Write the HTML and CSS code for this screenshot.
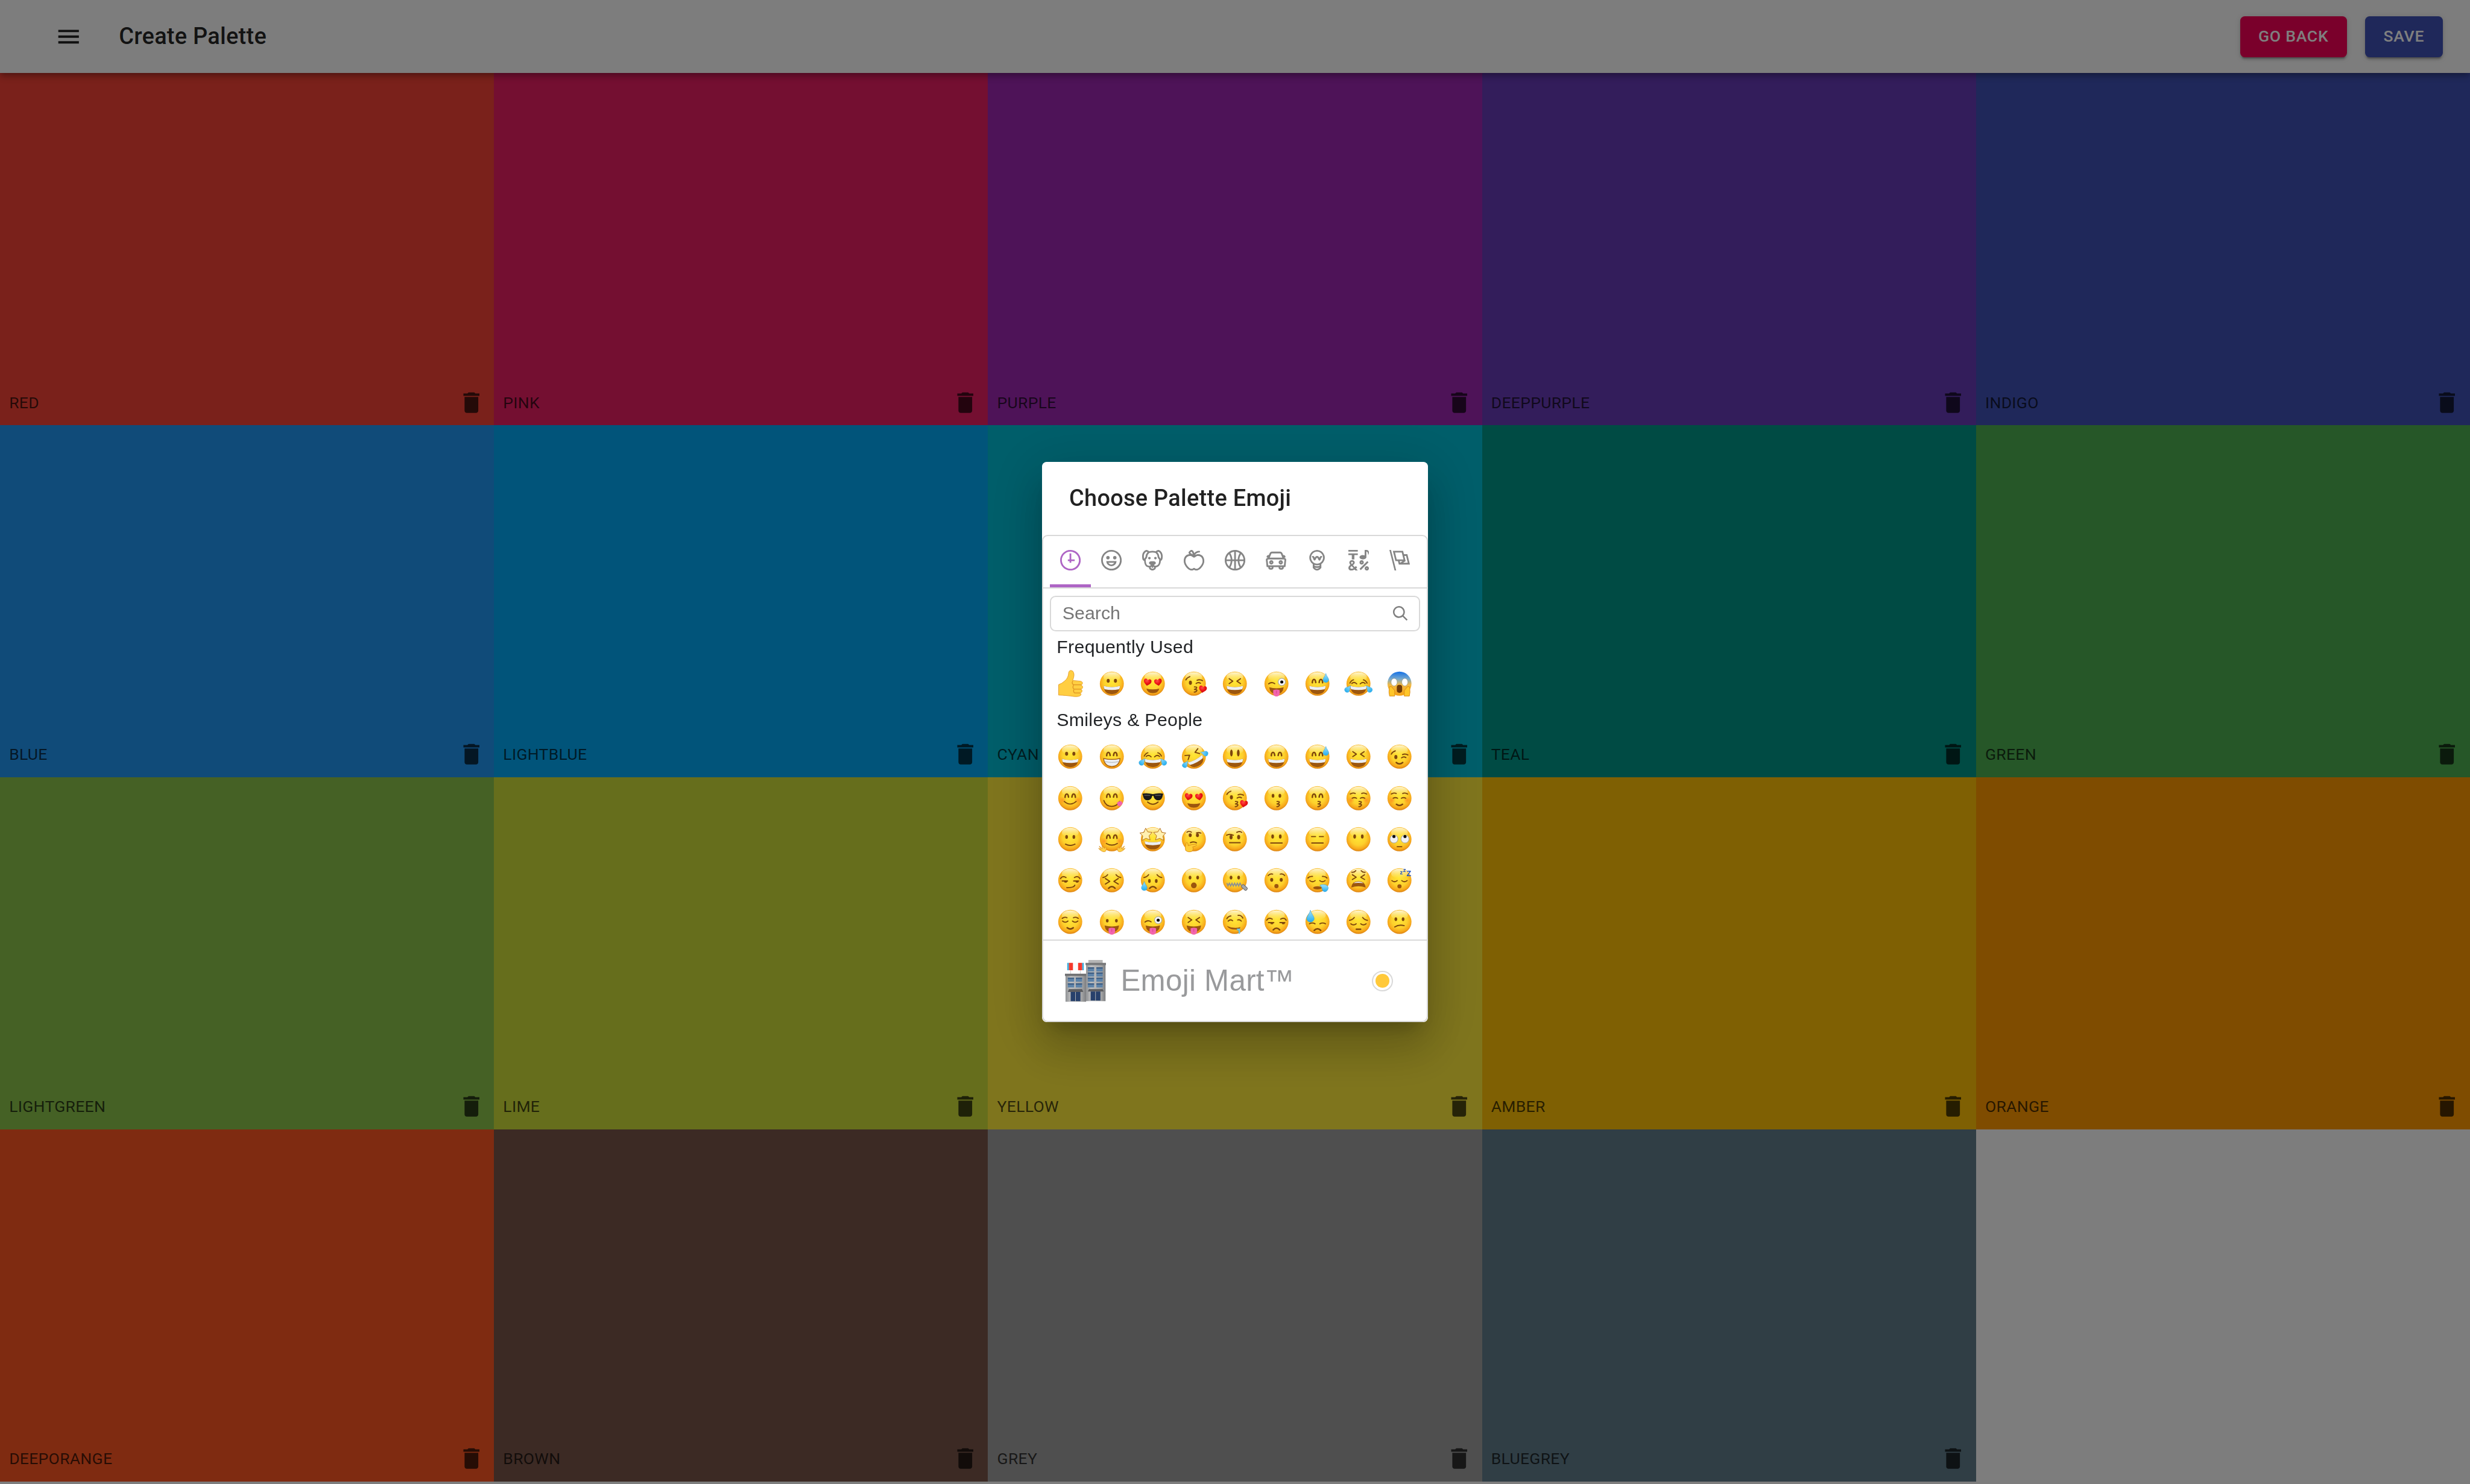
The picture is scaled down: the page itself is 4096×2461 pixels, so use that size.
FILE: index.html
```html
<!DOCTYPE html>
<html lang="en">
<head>
<meta charset="utf-8">
<title>Create Palette</title>
<link rel="stylesheet" href="styles.css">
</head>
<body>
<div class="app">
  <header class="appbar">
    <svg class="icon" viewBox="0 0 24 24"><path d="M3 18h18v-2H3v2zm0-5h18v-2H3v2zm0-7v2h18V6H3z"/></svg>
    <h1 class="appbar-title">Create Palette</h1>
    <div class="appbar-actions">
      <button class="btn btn-secondary">GO BACK</button>
      <button class="btn btn-primary">SAVE</button>
    </div>
  </header>
  <main class="palette" id="palette"></main>
</div>

<div class="backdrop">
  <section class="dialog">
    <h2 class="dialog-title">Choose Palette Emoji</h2>
    <div class="picker">
      <nav class="anchors">
        <span class="anchor anchor-selected"><svg viewBox="0 0 24 24"><path d="M13 4h-2l-.001 7H9v2h2v2h2v-2h4v-2h-4z"/><path d="M12 0C5.373 0 0 5.373 0 12s5.373 12 12 12 12-5.373 12-12S18.627 0 12 0m0 22C6.486 22 2 17.514 2 12S6.486 2 12 2s10 4.486 10 10-4.486 10-10 10"/></svg></span>
        <span class="anchor"><svg viewBox="0 0 24 24"><path d="M12 0C5.373 0 0 5.373 0 12s5.373 12 12 12 12-5.373 12-12S18.627 0 12 0m0 22C6.486 22 2 17.514 2 12S6.486 2 12 2s10 4.486 10 10-4.486 10-10 10"/><path d="M8 7a2 2 0 1 0-.001 3.999A2 2 0 0 0 8 7M16 7a2 2 0 1 0-.001 3.999A2 2 0 0 0 16 7M15.232 15c-.693 1.195-1.87 2-3.349 2-1.477 0-2.655-.805-3.347-2H15m3-2H6a6 6 0 1 0 12 0"/></svg></span>
        <span class="anchor"><svg viewBox="0 0 24 24"><path d="M15.5 8a1.5 1.5 0 1 0 .001 3.001A1.5 1.5 0 0 0 15.5 8M8.5 8a1.5 1.5 0 1 0 .001 3.001A1.5 1.5 0 0 0 8.5 8"/><path d="M18.933 0h-.027c-.97 0-2.138.787-3.018 1.497-1.274-.374-2.612-.51-3.887-.51-1.285 0-2.616.133-3.874.517C7.245.79 6.069 0 5.093 0h-.027C3.352 0 .07 2.67.002 7.026c-.039 2.479.276 4.238 1.04 5.013.254.258.882.677 1.295.882.191 3.177.922 5.238 2.536 6.38.897.637 2.187.949 3.2 1.102C8.04 20.6 8 20.795 8 21c0 1.773 2.35 3 4 3 1.648 0 4-1.227 4-3 0-.201-.038-.393-.072-.586 2.573-.385 5.435-1.877 5.925-7.587.396-.22.887-.568 1.104-.788.763-.774 1.079-2.534 1.04-5.013C23.929 2.67 20.646 0 18.933 0M3.223 9.135c-.237.281-.837 1.155-.884 1.238-.15-.41-.368-1.349-.337-3.291.051-3.281 2.478-4.972 3.091-5.031.256.015.731.27 1.265.646-1.11 1.171-2.275 2.915-2.352 5.125-.133.546-.398.858-.783 1.313M12 22c-.901 0-1.954-.693-2-1 0-.654.475-1.236 1-1.602V20a1 1 0 1 0 2 0v-.602c.524.365 1 .947 1 1.602-.046.307-1.099 1-2 1m3-3.48v.02a4.752 4.752 0 0 0-1.262-1.02c1.092-.516 2.239-1.334 2.239-2.217 0-1.842-1.781-2.195-3.977-2.195-2.196 0-3.978.354-3.978 2.195 0 .883 1.148 1.701 2.238 2.217A4.8 4.8 0 0 0 9 18.539v-.025c-1-.076-2.182-.281-2.973-.842-1.301-.92-1.838-3.045-1.853-6.478l.023-.041c.496-.826 1.49-1.45 1.804-3.102 0-2.047 1.357-3.631 2.362-4.522C9.37 3.178 10.555 3 11.948 3c1.447 0 2.685.192 3.733.57 1 .9 2.316 2.465 2.316 4.48.313 1.651 1.307 2.275 1.803 3.102.035.058.068.117.102.178-.059 5.967-1.949 7.01-4.902 7.19m6.628-8.202c-.037-.065-.074-.13-.113-.195a7.587 7.587 0 0 0-.739-.987c-.385-.455-.648-.768-.782-1.313-.076-2.209-1.241-3.954-2.353-5.124.531-.376 1.004-.63 1.261-.647.636.071 3.044 1.764 3.096 5.031.027 1.81-.347 3.218-.37 3.235"/></svg></span>
        <span class="anchor"><svg viewBox="0 0 24 24"><path d="M17 4.978c-1.838 0-2.876.396-3.68.934.513-1.172 1.768-2.934 4.68-2.934a1 1 0 0 0 0-2c-2.921 0-4.629 1.365-5.547 2.512-.064.078-.119.162-.18.244C11.73 1.838 10.798.023 9.207.023 8.579.022 7.85.306 7 .978 5.027 2.54 5.329 3.902 6.492 4.999 3.609 5.222 0 7.352 0 12.969c0 4.582 4.961 11.009 9 11.009 1.975 0 2.371-.486 3-1 .629.514 1.025 1 3 1 4.039 0 9-6.418 9-11 0-5.953-4.055-8-7-8M8.242 2.546c.641-.508.943-.523.965-.523.426.169.975 1.405 1.357 3.055-1.527-.629-2.741-1.352-2.98-1.846.059-.112.241-.356.658-.686M15 21.978c-1.08 0-1.21-.109-1.559-.402l-.176-.146c-.367-.302-.816-.452-1.266-.452s-.898.15-1.266.452l-.176.146c-.347.292-.477.402-1.557.402-2.813 0-7-5.389-7-9.009 0-5.823 4.488-5.991 5-5.991 1.939 0 2.484.471 3.387 1.251l.323.276a1.995 1.995 0 0 0 2.58 0l.323-.276c.902-.78 1.447-1.251 3.387-1.251.512 0 5 .168 5 6 0 3.617-4.187 9-7 9"/></svg></span>
        <span class="anchor"><svg viewBox="0 0 24 24"><path d="M12 0C5.373 0 0 5.372 0 12c0 6.627 5.373 12 12 12 6.628 0 12-5.373 12-12 0-6.628-5.372-12-12-12m9.949 11H17.05c.224-2.527 1.232-4.773 1.968-6.113A9.966 9.966 0 0 1 21.949 11M13 11V2.051a9.945 9.945 0 0 1 4.432 1.564c-.858 1.491-2.156 4.22-2.392 7.385H13zm-2 0H8.961c-.238-3.165-1.536-5.894-2.393-7.385A9.95 9.95 0 0 1 11 2.051V11zm0 2v8.949a9.937 9.937 0 0 1-4.432-1.564c.857-1.492 2.155-4.221 2.393-7.385H11zm4.04 0c.236 3.164 1.534 5.893 2.392 7.385A9.92 9.92 0 0 1 13 21.949V13h2.04zM4.982 4.887C5.718 6.227 6.726 8.473 6.951 11h-4.9a9.977 9.977 0 0 1 2.931-6.113M2.051 13h4.9c-.226 2.527-1.233 4.771-1.969 6.113A9.972 9.972 0 0 1 2.051 13m16.967 6.113c-.735-1.342-1.744-3.586-1.968-6.113h4.899a9.961 9.961 0 0 1-2.931 6.113"/></svg></span>
        <span class="anchor"><svg viewBox="0 0 24 24"><path d="M6.5 12C5.122 12 4 13.121 4 14.5S5.122 17 6.5 17 9 15.879 9 14.5 7.878 12 6.5 12m0 3c-.275 0-.5-.225-.5-.5s.225-.5.5-.5.5.225.5.5-.225.5-.5.5M17.5 12c-1.378 0-2.5 1.121-2.5 2.5s1.122 2.5 2.5 2.5 2.5-1.121 2.5-2.5-1.122-2.5-2.5-2.5m0 3c-.275 0-.5-.225-.5-.5s.225-.5.5-.5.5.225.5.5-.225.5-.5.5"/><path d="M22.482 9.494l-1.039-.346L21.4 9h.6c.552 0 1-.439 1-.992 0-.006-.003-.008-.003-.008H23c0-1-.889-2-1.984-2h-.642l-.731-1.717C19.262 3.012 18.091 2 16.764 2H7.236C5.909 2 4.738 3.012 4.357 4.283L3.626 6h-.642C1.889 6 1 7 1 8h.003S1 8.002 1 8.008C1 8.561 1.448 9 2 9h.6l-.043.148-1.039.346a2.001 2.001 0 0 0-1.359 2.097l.751 7.508a1 1 0 0 0 .994.901H3v1c0 1.103.896 2 2 2h2c1.104 0 2-.897 2-2v-1h6v1c0 1.103.896 2 2 2h2c1.104 0 2-.897 2-2v-1h1.096a.999.999 0 0 0 .994-.901l.751-7.508a2.001 2.001 0 0 0-1.359-2.097M6.273 4.857C6.402 4.43 6.788 4 7.236 4h9.527c.448 0 .834.43.963.857L19.313 9H4.688l1.585-4.143zM7 21H5v-1h2v1zm12 0h-2v-1h2v1zm2.189-3H2.811l-.662-6.607L3 11h18l.852.393L21.189 18z"/></svg></span>
        <span class="anchor"><svg viewBox="0 0 24 24"><path d="M12 0a9 9 0 0 0-5 16.482V21s2.035 3 5 3 5-3 5-3v-4.518A9 9 0 0 0 12 0zm0 2c3.86 0 7 3.141 7 7s-3.14 7-7 7-7-3.141-7-7 3.14-7 7-7zM9 17.477c.94.332 1.946.523 3 .523s2.06-.19 3-.523v.834c-.91.436-1.925.689-3 .689a6.924 6.924 0 0 1-3-.69v-.833zm.236 3.07A8.854 8.854 0 0 0 12 21c.965 0 1.888-.167 2.758-.451C14.155 21.173 13.153 22 12 22c-1.102 0-2.117-.789-2.764-1.453z"/><path d="M14.745 12.449h-.004c-.852-.024-1.188-.858-1.577-1.824-.421-1.061-.703-1.561-1.182-1.566h-.009c-.481 0-.783.497-1.235 1.537-.436.982-.801 1.811-1.636 1.791l-.276-.043c-.565-.171-.853-.691-1.284-1.794-.125-.313-.202-.632-.27-.913-.051-.213-.127-.53-.195-.634C7.067 9.004 7.039 9 6.99 9A1 1 0 0 1 7 7h.01c1.662.017 2.015 1.373 2.198 2.134.486-.981 1.304-2.058 2.797-2.075 1.531.018 2.28 1.153 2.731 2.141l.002-.008C14.944 8.424 15.327 7 16.979 7h.032A1 1 0 1 1 17 9h-.011c-.149.076-.256.474-.319.709a6.484 6.484 0 0 1-.311.951c-.429.973-.79 1.789-1.614 1.789"/></svg></span>
        <span class="anchor"><svg viewBox="0 0 24 24"><path d="M0 0h11v2H0zM4 11h3V6h4V4H0v2h4zM15.5 17c1.381 0 2.5-1.116 2.5-2.493s-1.119-2.493-2.5-2.493S13 13.13 13 14.507 14.119 17 15.5 17m0-2.986c.276 0 .5.222.5.493 0 .272-.224.493-.5.493s-.5-.221-.5-.493.224-.493.5-.493M21.5 19.014c-1.381 0-2.5 1.116-2.5 2.493S20.119 24 21.5 24s2.5-1.116 2.5-2.493-1.119-2.493-2.5-2.493m0 2.986a.497.497 0 0 1-.5-.493c0-.271.224-.493.5-.493s.5.222.5.493a.497.497 0 0 1-.5.493M22 13l-9 9 1.513 1.5 8.99-9.009zM17 11c2.209 0 4-1.119 4-2.5V2s.985-.161 1.498.949C23.01 4.055 23 6 23 6s1-1.119 1-3.135C24-.02 21 0 21 0h-2v6.347A5.853 5.853 0 0 0 17 6c-2.209 0-4 1.119-4 2.5s1.791 2.5 4 2.5M10.297 20.482l-1.475-1.585a47.54 47.54 0 0 1-1.442 1.129c-.307-.288-.989-1.016-2.045-2.183.902-.836 1.479-1.466 1.729-1.892s.376-.871.376-1.336c0-.592-.273-1.178-.818-1.759-.546-.581-1.329-.871-2.349-.871-1.008 0-1.79.293-2.344.879-.556.587-.832 1.181-.832 1.784 0 .813.419 1.748 1.256 2.805-.847.614-1.444 1.208-1.794 1.784a3.465 3.465 0 0 0-.523 1.833c0 .857.308 1.56.924 2.107.616.549 1.423.823 2.42.823 1.173 0 2.444-.379 3.813-1.137L8.235 24h2.819l-2.09-2.383 1.333-1.135zm-6.736-6.389a1.02 1.02 0 0 1 .73-.286c.31 0 .559.085.747.254a.849.849 0 0 1 .283.659c0 .518-.419 1.112-1.257 1.784-.536-.651-.805-1.231-.805-1.742a.901.901 0 0 1 .302-.669M3.74 22c-.427 0-.778-.116-1.057-.349-.279-.232-.418-.487-.418-.766 0-.594.509-1.288 1.527-2.083.968 1.134 1.717 1.946 2.248 2.438-.921.507-1.686.76-2.3.76"/></svg></span>
        <span class="anchor"><svg viewBox="0 0 24 24"><path d="M0 0l6.084 24H8L1.916 0zM21 5h-4l-1-4H4l3 12h3l1 4h13L21 5zM6.563 3h7.875l2 8H8.563l-2-8zm8.832 10l-2.856 1.904L12.063 13h3.332zM19 13l-1.5-6h1.938l2 8H16l3-2z"/></svg></span>
      </nav>
      <div class="search">
        <span>Search</span>
        <svg viewBox="0 0 20 20"><path d="M12.9 14.32a8 8 0 1 1 1.41-1.41l5.35 5.33-1.42 1.42-5.33-5.34zM8 14A6 6 0 1 0 8 2a6 6 0 0 0 0 12z"/></svg>
      </div>
      <div class="scroll">
        <h3 class="category">Frequently Used</h3>
        <div class="emojis" data-list="thumb grin hearts kissHeart laugh winkTongue sweatGrin joy scream"></div>
        <h3 class="category">Smileys &amp; People</h3>
        <div class="emojis" data-list="grin beam joy rofl smiley smile sweatGrin laugh wink blush yum cool hearts kissHeart kiss kissSmile kissClosed relaxed slight hug star think brow neutral blank noMouth roll smirk persevere sadSweat open zip hushed sleepy tired sleeping relieved tongue winkTongue squintTongue drool unamused coldSweat pensive confused"></div>
      </div>
      <footer class="preview">
        <svg class="store" viewBox="0 0 72 74">
          <defs><linearGradient id="wall"><stop offset="0" stop-color="#8f9193"/><stop offset=".25" stop-color="#bfc0c1"/><stop offset=".8" stop-color="#a2a3a4"/><stop offset="1" stop-color="#7d7e80"/></linearGradient></defs>
          <path d="M10 18v7M27 18v7" stroke="#c9c9c9"/>
          <path d="M4 5h29v13H4z" fill="#fbfbfb"/><path d="M4 5h3v13H4zM30 5h3v13h-3z" fill="#35aee0"/><path d="M7 5h7v13H7zM23 5h7v13h-7z" fill="#f5382b"/>
          <path d="M41 0h25v6H41z" fill="#b5b5b5"/>
          <path d="M37 7h34v65H37z" fill="url(#wall)"/><path d="M36 5h36v4H36z" fill="#77787a"/>
          <path d="M1 27h36v46H1z" fill="url(#wall)"/><path d="M0 24h37v4H0z" fill="#707173"/>
          <path d="M40 13h11v7H40zM55 13h11v7H55zM40 22h11v7H40zM55 22h11v7H55zM40 31h11v7H40zM55 31h11v7H55zM40 41h11v7H40zM55 41h11v7H55zM5 31h11v7H5zM19 31h11v7H19zM5 41h11v7H5zM19 41h11v7H19z" fill="#5d83a9"/>
          <path d="M40 13h11v2H40zM55 13h11v2H55zM40 22h11v2H40zM55 22h11v2H55zM40 31h11v2H40zM55 31h11v2H55zM40 41h11v2H40zM55 41h11v2H55zM5 31h11v2H5zM19 31h11v2H19zM5 41h11v2H5zM19 41h11v2H19z" fill="#38577d"/>
          <path d="M42 51h24l2 4H40zM7 51h23l2 5H5z" fill="#5c5d60"/>
          <path d="M45 55h8v16h-8zM54 55h8v16h-8zM10 56h8v16h-8zM19 56h8v16h-8z" fill="#27406b"/>
        </svg>
        <span class="preview-title">Emoji Mart™</span>
        <span class="skin"><span class="skin-tone"></span></span>
      </footer>
    </div>
  </section>
</div>
<script src="app.js"></script>
</body>
</html>
```

FILE: styles.css
```css
/* 1rem stands for 10 design units; the window is 216rem wide. */
html { font-size: 18.963px; }
* { box-sizing: border-box; }
body { margin: 0; background: #fafafa; font-family: Roboto, sans-serif; overflow: hidden; }
h1, h2, h3 { margin: 0; }

.app { height: 100vh; display: flex; flex-direction: column; }
.appbar {
  flex: none; height: 6.4rem; display: flex; align-items: center;
  padding: 0 2.4rem 0 4.8rem; gap: 3.2rem;
  background: #fafafa; color: rgba(0, 0, 0, .87);
  position: relative; z-index: 1;
  box-shadow: 0 .2rem .4rem -.1rem rgba(0,0,0,.2), 0 .4rem .5rem 0 rgba(0,0,0,.14), 0 .1rem 1rem 0 rgba(0,0,0,.12);
}
.icon { width: 2.4rem; height: 2.4rem; fill: currentColor; display: block; }
.appbar-title { font-size: 2rem; font-weight: 500; line-height: 1.6; letter-spacing: .0075em; }
.appbar-actions { margin-left: auto; display: flex; gap: 1.6rem; }
.btn {
  height: 3.6rem; padding: 0 1.6rem; border: 0; border-radius: .4rem;
  font: 500 1.4rem/1.75 Roboto, sans-serif; letter-spacing: .02857em; color: #fff;
  box-shadow: 0 .3rem .1rem -.2rem rgba(0,0,0,.2), 0 .2rem .2rem 0 rgba(0,0,0,.14), 0 .1rem .5rem 0 rgba(0,0,0,.12);
}
.btn-primary { background: #3f51b5; }
.btn-secondary { background: #f50057; }

.palette { display: grid; grid-template-columns: repeat(5, 1fr); grid-auto-rows: 30.79rem; }
.color { display: flex; align-items: flex-end; justify-content: space-between; padding: 0 .8rem .8rem; color: rgba(0, 0, 0, .7); }
.color-name { font-size: 1.4rem; font-weight: 400; line-height: 2.4rem; letter-spacing: .01071em; }

.backdrop { position: fixed; inset: 0; z-index: 2; display: flex; align-items: center; justify-content: center; background: rgba(0, 0, 0, .5); }
.dialog {
  width: 33.8rem; height: 49rem; background: #fff; border-radius: .4rem; overflow: hidden;
  display: flex; flex-direction: column; color: rgba(0, 0, 0, .87);
  box-shadow: 0 1.1rem 1.5rem -.7rem rgba(0,0,0,.2), 0 2.4rem 3.8rem .3rem rgba(0,0,0,.14), 0 .9rem 4.6rem .8rem rgba(0,0,0,.12);
}
.dialog-title { padding: 1.6rem 2.4rem; font-size: 2rem; font-weight: 500; line-height: 1.6; letter-spacing: .0075em; }

.picker { height: 42.6rem; border: 2px solid #d9d9d9; border-radius: .5rem; display: flex; flex-direction: column; font-family: "Liberation Sans", Arial, sans-serif; letter-spacing: .015rem; color: #222427; }
.anchors { flex: none; height: 4.6rem; display: flex; padding: 0 .6rem; border-bottom: 2px solid #d9d9d9; color: #858585; }
.anchor { flex: 1; display: flex; justify-content: center; padding-top: 1.2rem; }
.anchor svg { width: 1.8rem; height: 1.8rem; fill: currentColor; }
.anchor-selected { color: #ae65c5; border-bottom: .3rem solid #ae65c5; }

.search { flex: none; height: 3.1rem; margin: .6rem .6rem 0; padding: 0 1rem; border: 2px solid #d9d9d9; border-radius: .5rem; display: flex; align-items: center; justify-content: space-between; font-size: 1.6rem; letter-spacing: 0; color: #757575; }
.search svg { width: 1.3rem; height: 1.3rem; fill: #808080; margin-right: -.05rem; }

.scroll { flex: 1; min-height: 0; overflow: hidden; padding: 0 .6rem; }
.category { padding: .5rem .6rem; height: 2.8rem; font-size: 1.6rem; font-weight: 400; line-height: 1.8rem; }
.emojis { display: grid; grid-template-columns: repeat(9, 3.6rem); grid-auto-rows: 3.6rem; }
.emoji { width: 2.4rem; height: 2.4rem; margin: .6rem; display: block; overflow: visible; }

.preview { flex: none; height: 7.1rem; border-top: 2px solid #d9d9d9; display: flex; align-items: center; padding: 0 3rem 0 1.9rem; }
.store { width: 3.6rem; height: 3.7rem; }
.preview-title { margin-left: 1.3rem; padding-bottom: .1rem; font-size: 2.6rem; color: #999a9c; }
.skin { margin-left: auto; width: 1.8rem; height: 1.8rem; border: 2px solid #d9d9d9; border-radius: 50%; display: flex; align-items: center; justify-content: center; }
.skin-tone { width: 1.2rem; height: 1.2rem; border-radius: 50%; background: #ffc93a; }

/* emoji line work */
.ln { fill: none; stroke: #7d460d; stroke-width: 6; stroke-linecap: round; stroke-linejoin: round; }
.ln-thick { stroke-width: 8; }
.dark { fill: #7d460d; }
.mouth { fill: #9c560e; }
.teeth { fill: #eceff3; }
.pink { fill: #f264ad; }
.zzz { fill: #2456c4; font: 700 30px "Liberation Sans", sans-serif; }
.zbig { font-size: 40px; }
```

FILE: app.js
```js
const colors = [
  ['RED', '#f44336'], ['PINK', '#e91e63'], ['PURPLE', '#9c27b0'], ['DEEPPURPLE', '#673ab7'], ['INDIGO', '#3f51b5'],
  ['BLUE', '#2196f3'], ['LIGHTBLUE', '#03a9f4'], ['CYAN', '#00bcd4'], ['TEAL', '#009688'], ['GREEN', '#4caf50'],
  ['LIGHTGREEN', '#8bc34a'], ['LIME', '#cddc39'], ['YELLOW', '#ffeb3b'], ['AMBER', '#ffc107'], ['ORANGE', '#ff9800'],
  ['DEEPORANGE', '#ff5722'], ['BROWN', '#795548'], ['GREY', '#9e9e9e'], ['BLUEGREY', '#607d8b']
];
document.getElementById('palette').innerHTML = colors.map(([name, value]) =>
  `<div class="color" style="background:${value}"><span class="color-name">${name}</span>` +
  '<svg class="icon" viewBox="0 0 24 24"><path d="M6 19c0 1.1.9 2 2 2h8c1.1 0 2-.9 2-2V7H6v12zM19 4h-3.5l-1-1h-5l-1 1H5v2h14V4z"/></svg></div>'
).join('');

// Shape helpers. Every emoji is drawn around 0,0 with a face radius of 63.
const ln = (d, c = '') => `<path class="ln ${c}" d="${d}"/>`;
const both = s => `${s}<g transform="scale(-1 1)">${s}</g>`;
const oval = (x, y, rx, ry, c = 'dark') => `<ellipse class="${c}" cx="${x}" cy="${y}" rx="${rx}" ry="${ry}"/>`;
const dots = (x, y, rx = 7, ry = 10) => oval(-x, y, rx, ry) + oval(x, y, rx, ry);
const drop = (x, y, s = 1, r = 0) => `<path transform="translate(${x} ${y}) rotate(${r}) scale(${s})" d="M0 -24C4 -8 15 0 15 10A15 14 0 0 1 -15 10C-15 0 -4 -8 0 -24z" fill="url(#water)" stroke="#2b9ad6" stroke-width="1.5"/>`;
const heart = (x, y, s = 1, r = 0) => `<path transform="translate(${x} ${y}) rotate(${r}) scale(${s})" d="M0 19C-8 12 -21 5 -20 -7C-19 -20 -4 -20 0 -9C4 -20 19 -20 20 -7C21 5 8 12 0 19z" fill="url(#love)"/>`;
const face = '<circle r="63" fill="url(#skin)"/><ellipse cy="-35" rx="44" ry="25" fill="url(#shine)"/>';
const grinMouth = '<path class="mouth" d="M-43 12Q0 24 43 12Q41 55 0 55Q-41 55 -43 12z"/><path class="teeth" d="M-43 12Q0 24 43 12Q42 24 38 29Q0 38 -38 29Q-42 24 -43 12z"/>';
const happy = both(ln('M-27 -5Q-26 -22 -18 -22Q-11 -22 -9 -6', 'ln-thick'));
const squint = both(ln('M-30 -26L-11 -13L-30 0'));
const tongueMouth = '<path class="mouth" d="M-38 19Q0 30 38 19Q34 54 0 56Q-34 54 -38 19z"/><path class="pink" d="M-17 34Q0 28 17 34V52Q14 67 0 67Q-14 67 -17 52z"/><path d="M0 36V52" stroke="#d93c8a" stroke-width="3"/>';
const bigWink = ln('M-41 1Q-26 -11 -9 0') + '<circle cx="28" cy="-9" r="19" fill="#f4f5f7" stroke="#999" stroke-width="3"/><circle cx="28" cy="-9" r="8"/>';
const joyEyes = both(ln('M-35 -1Q-22 -12 -9 1') + ln('M-45 -3Q-38 -17 -26 -20'));
const winkEyes = ln('M-43 -13Q-36 -26 -22 -30') + oval(-19, 2, 8, 11) + ln('M16 -11Q30 -17 44 -9') + ln('M11 6Q22 -2 34 5');
const kissMouth = ln('M3 17Q19 16 14 24Q11 29 3 30Q20 31 15 38Q11 45 2 44');
const cheeks = '<circle cx="-40" cy="10" r="20" fill="url(#blush)"/><circle cx="40" cy="10" r="20" fill="url(#blush)"/>';
const calmBrows = both(ln('M-43 -22Q-30 -31 -17 -25'));
const shutUp = both(ln('M-33 0Q-22 -6 -10 0'));
const shutDown = both(ln('M-40 2Q-26 14 -12 2'));
const sadBrows = both(ln('M-47 -14Q-30 -17 -22 -29'));
const sadMouth = ln('M-17 42Q0 25 17 42', 'ln-thick');
const sideEyes = ln('M-42 4H-14') + oval(-24, 7, 8, 6) + ln('M18 4H44') + oval(36, 7, 8, 6);
const slyBrows = both(ln('M-51 -9Q-40 -26 -22 -14'));
const hand = '<path d="M-12 14Q-28 4 -27 -1L-14 6L-24 -12L-7 2L-10 -15L4 1Q10 -12 13 -2L11 13Q4 22 -12 14z" fill="#ffd147" stroke="#dd911d" stroke-width="2.5"/>';
const starEye = '<path d="M-38 -58L-26 -38L-4 -36L-20 -18L-14 4L-36 -5L-57 6L-53 -17L-68 -33L-47 -36z" fill="#fff0b0" stroke="#b06a1c" stroke-width="3"/>';

const emoji = {
  thumb: '<path d="M-61 5Q-44 0 -28 -15Q-9 -31 -8 -60Q-2 -75 13 -66Q27 -51 13 -17L54 -13Q67 -10 64 0Q61 7 55 7Q69 11 64 24Q61 29 55 29Q66 33 61 43Q58 49 52 49Q61 56 54 62Q43 72 3 65Q-25 62 -42 61L-61 60z" fill="#ffce42" stroke="#e7a02b" stroke-width="3"/><path d="M14 -14Q5 -2 18 6H56M17 8Q10 24 21 29H56M19 31Q15 44 23 49H52" fill="none" stroke="#dd9222" stroke-width="4"/>',
  grin: face + dots(19, -15, 8, 10) + grinMouth,
  beam: face + happy + '<path d="M-43 10Q0 20 43 10Q39 50 0 52Q-39 50 -43 10z" fill="#eceff3" stroke="#9c560e" stroke-width="4"/><path d="M-39 25Q0 36 39 25" fill="none" stroke="#a9adb3" stroke-width="3"/>',
  smiley: face + dots(18, -19, 7, 18) + grinMouth,
  smile: face + happy + grinMouth,
  laugh: face + squint + grinMouth,
  sweatGrin: face + happy + grinMouth + drop(44, -30),
  joy: face + joyEyes + grinMouth + drop(-54, 26, .9, 40) + drop(54, 26, .9, -40),
  rofl: face + `<g transform="rotate(-28)">${both(ln('M-38 -27L-16 -17L-34 0'))}${grinMouth}</g>` + drop(54, -18, .85, -75) + drop(-43, 39, .85, 35),
  wink: face + winkEyes + ln('M-17 31Q0 45 17 31', 'ln-thick'),
  hearts: face + heart(-28, -8, 1, 10) + heart(28, -8, 1, -10) + '<path class="mouth" d="M-34 26Q0 34 34 26Q28 50 0 50Q-28 50 -34 26z"/>',
  kissHeart: face + `<g transform="translate(1 -7)">${winkEyes}</g>` + kissMouth + heart(47, 29, 1.02, 10),
  winkTongue: face + bigWink + tongueMouth,
  scream: '<circle r="63" fill="url(#fear)"/>' + both('<ellipse cx="-28" cy="-8" rx="16" ry="20" fill="#fff" stroke="#8b8b78" stroke-width="2"/><path d="M-54 24Q-56 14 -46 15Q-36 16 -33 28Q-23 32 -25 44V65H-52L-55 45z" fill="#ffc629" stroke="#d98a12" stroke-width="3"/>') + '<rect x="-14" y="6" width="28" height="42" rx="13" fill="#6f3a08"/>',
  blush: face + cheeks + happy + ln('M-31 17Q0 44 31 17'),
  yum: face + happy + ln('M-42 12Q-32 43 0 43Q28 42 40 17') + '<path class="pink" d="M28 22L44 14Q62 22 54 32Q45 45 36 42Q27 34 28 22z"/>',
  cool: face + '<path d="M-55 -24Q-28 -29 0 -21Q28 -29 55 -24L52 -16Q49 11 28 11Q8 11 3 -13H-3Q-8 11 -28 11Q-49 11 -52 -16z" fill="#191919"/><path d="M-45 -15H-14M12 -15H43" stroke="#555" stroke-width="5"/>' + ln('M-28 20Q0 43 28 20'),
  kiss: face + dots(18, -13, 7, 10) + kissMouth,
  kissSmile: face + happy + kissMouth,
  kissClosed: face + cheeks + calmBrows + shutUp + kissMouth,
  relaxed: face + cheeks + calmBrows + shutUp + ln('M-16 32Q0 44 16 32', 'ln-thick'),
  slight: face + dots(19, -12, 7, 10) + ln('M-25 26Q0 39 25 26'),
  hug: face + cheeks + happy + ln('M-29 22Q0 40 29 22') + `<g transform="translate(-42 48)">${hand}</g><g transform="translate(42 48) scale(-1 1)">${hand}</g>`,
  star: face + `<g transform="translate(0 -2)">${grinMouth}</g>` + both(starEye),
  think: face + ln('M-36 -37Q-26 -46 -13 -37M14 -33Q24 -37 37 -32') + dots(19, -21, 8, 10) + ln('M-18 18Q0 10 14 19') + '<path d="M-41 22Q-36 10 -31 24L-30 34Q-14 27 10 26Q20 31 8 36L-6 40Q1 51 -9 63Q-27 71 -43 59Q-48 42 -41 22z" fill="#ffcd37" stroke="#d98e18" stroke-width="3"/>',
  brow: face + ln('M-43 -21Q-30 -30 -8 -21M10 -36Q25 -45 36 -36') + dots(20, -11, 8, 12) + ln('M-28 18H28'),
  neutral: face + dots(20, -14, 7, 11) + ln('M-30 20H30'),
  blank: face + ln('M-31 -14H-10M10 -14H31') + ln('M-30 20H30'),
  noMouth: face + dots(20, -14, 7, 11),
  roll: face + both('<circle cx="-29" cy="-1" r="21" fill="#f0f1f3" stroke="#a09a8c" stroke-width="3"/>') + '<circle cx="-29" cy="-14" r="8"/><circle cx="29" cy="-14" r="8"/>' + ln('M-12 39H12'),
  smirk: face + slyBrows + sideEyes + ln('M-18 39Q20 40 24 26'),
  persevere: face + sadBrows + both(ln('M-34 -9L-11 6L-34 20')) + sadMouth,
  sadSweat: face + sadBrows + dots(18, 4, 7, 10) + sadMouth + drop(-45, 30),
  open: face + dots(20, -14, 7, 10) + oval(0, 27, 15, 15, 'mouth'),
  zip: face + dots(20, -14, 7, 10) + '<path d="M-42 15L-36 29L-29 16L-22 30L-15 16L-8 30L-1 16L6 30L13 16L20 30L27 16L34 28" fill="none" stroke="#8c8f94" stroke-width="6"/><rect x="37" y="24" width="34" height="17" rx="6" transform="rotate(42 45 30)" fill="#a5a7aa" stroke="#66686b" stroke-width="3"/>',
  hushed: face + both(ln('M-43 -25Q-33 -36 -20 -32')) + dots(25, -2, 8, 10) + oval(0, 31, 11, 11, 'mouth'),
  sleepy: face + both(ln('M-50 -12Q-40 -22 -26 -20')) + shutDown + oval(0, 40, 22, 8, 'mouth') + '<path d="M12 27Q25 20 42 24Q58 30 56 44Q50 62 36 60Q24 57 24 42Q23 33 12 27z" fill="url(#water)" stroke="#2b9ad6" stroke-width="2"/>',
  tired: face + both(ln('M-35 -42Q-22 -40 -14 -50')) + both(ln('M-32 -29L-12 -16L-32 -4')) + '<path class="mouth" d="M-38 38Q-34 5 0 5Q34 5 38 38Q0 26 -38 38z"/><path class="teeth" d="M-27 15Q-17 7 0 7Q17 7 27 15Q0 12 -27 15z"/>',
  sleeping: face + shutDown + oval(0, 32, 11, 11, 'mouth') + '<text class="zzz" x="2" y="-32">z</text><text class="zzz" x="19" y="-43">z</text><text class="zzz zbig" x="37" y="-22">Z</text>',
  relieved: face + both(ln('M-42 -18Q-31 -28 -17 -22')) + `<g transform="translate(0 -6)">${shutDown}</g>` + ln('M-16 31Q0 44 16 31', 'ln-thick'),
  tongue: face + dots(24, -6, 7, 9) + tongueMouth,
  squintTongue: face + `<g transform="translate(0 3)">${squint}</g>` + tongueMouth,
  drool: face + ln('M-42 -17Q-34 -30 -21 -31M17 -34Q32 -37 42 -20') + ln('M-35 -4Q-23 -15 -12 -6M15 -10Q26 -14 34 -4') + '<path class="mouth" d="M-42 21Q-8 38 29 28Q28 40 8 40Q-30 42 -42 21z"/><path d="M11 36H27V58Q22 68 20 55V44H12z" fill="#79cef0" stroke="#4da9cf" stroke-width="2"/>',
  unamused: face + slyBrows + sideEyes + sadMouth,
  coldSweat: face + both(ln('M-42 10Q-27 2 -13 10')) + `<g transform="translate(0 3)">${sadMouth}</g>` + drop(-37, -30, 1.3),
  pensive: face + `<g transform="translate(0 6)">${sadBrows}</g>` + `<g transform="translate(0 8)">${shutDown}</g>` + ln('M-11 39H11', 'ln-thick'),
  confused: face + dots(19, -14, 7, 10) + ln('M-25 27Q-3 12 25 20')
};

const defs = `<svg width="0" height="0" style="position:absolute"><defs>
<radialGradient id="skin" cx=".5" cy=".42" r=".6"><stop offset="0" stop-color="#ffe735"/><stop offset=".55" stop-color="#fdd02c"/><stop offset=".82" stop-color="#f7a81b"/><stop offset="1" stop-color="#d67b10"/></radialGradient>
<linearGradient id="shine" x1="0" y1="0" x2="0" y2="1"><stop offset="0" stop-color="#fffdf0" stop-opacity=".85"/><stop offset="1" stop-color="#fff6a0" stop-opacity="0"/></linearGradient>
<linearGradient id="fear" x1="0" y1="0" x2="0" y2="1"><stop offset="0" stop-color="#1571e6"/><stop offset=".3" stop-color="#75a9d0"/><stop offset=".55" stop-color="#f1b944"/><stop offset="1" stop-color="#f6a316"/></linearGradient>
<linearGradient id="water" x1="0" y1="0" x2="0" y2="1"><stop offset="0" stop-color="#a5e2fb"/><stop offset="1" stop-color="#22aef0"/></linearGradient>
<radialGradient id="love" cx=".4" cy=".3" r=".8"><stop offset="0" stop-color="#ff4a4a"/><stop offset=".5" stop-color="#ec1313"/><stop offset="1" stop-color="#b90d12"/></radialGradient>
<radialGradient id="blush"><stop offset="0" stop-color="#ff7a1c" stop-opacity=".65"/><stop offset="1" stop-color="#ff8a1c" stop-opacity="0"/></radialGradient>
</defs></svg>`;
document.body.insertAdjacentHTML('afterbegin', defs);

document.querySelectorAll('.emojis').forEach(box => {
  box.innerHTML = box.dataset.list.split(' ')
    .map(name => `<svg class="emoji" viewBox="-72 -72 144 144">${emoji[name]}</svg>`).join('');
});
```
